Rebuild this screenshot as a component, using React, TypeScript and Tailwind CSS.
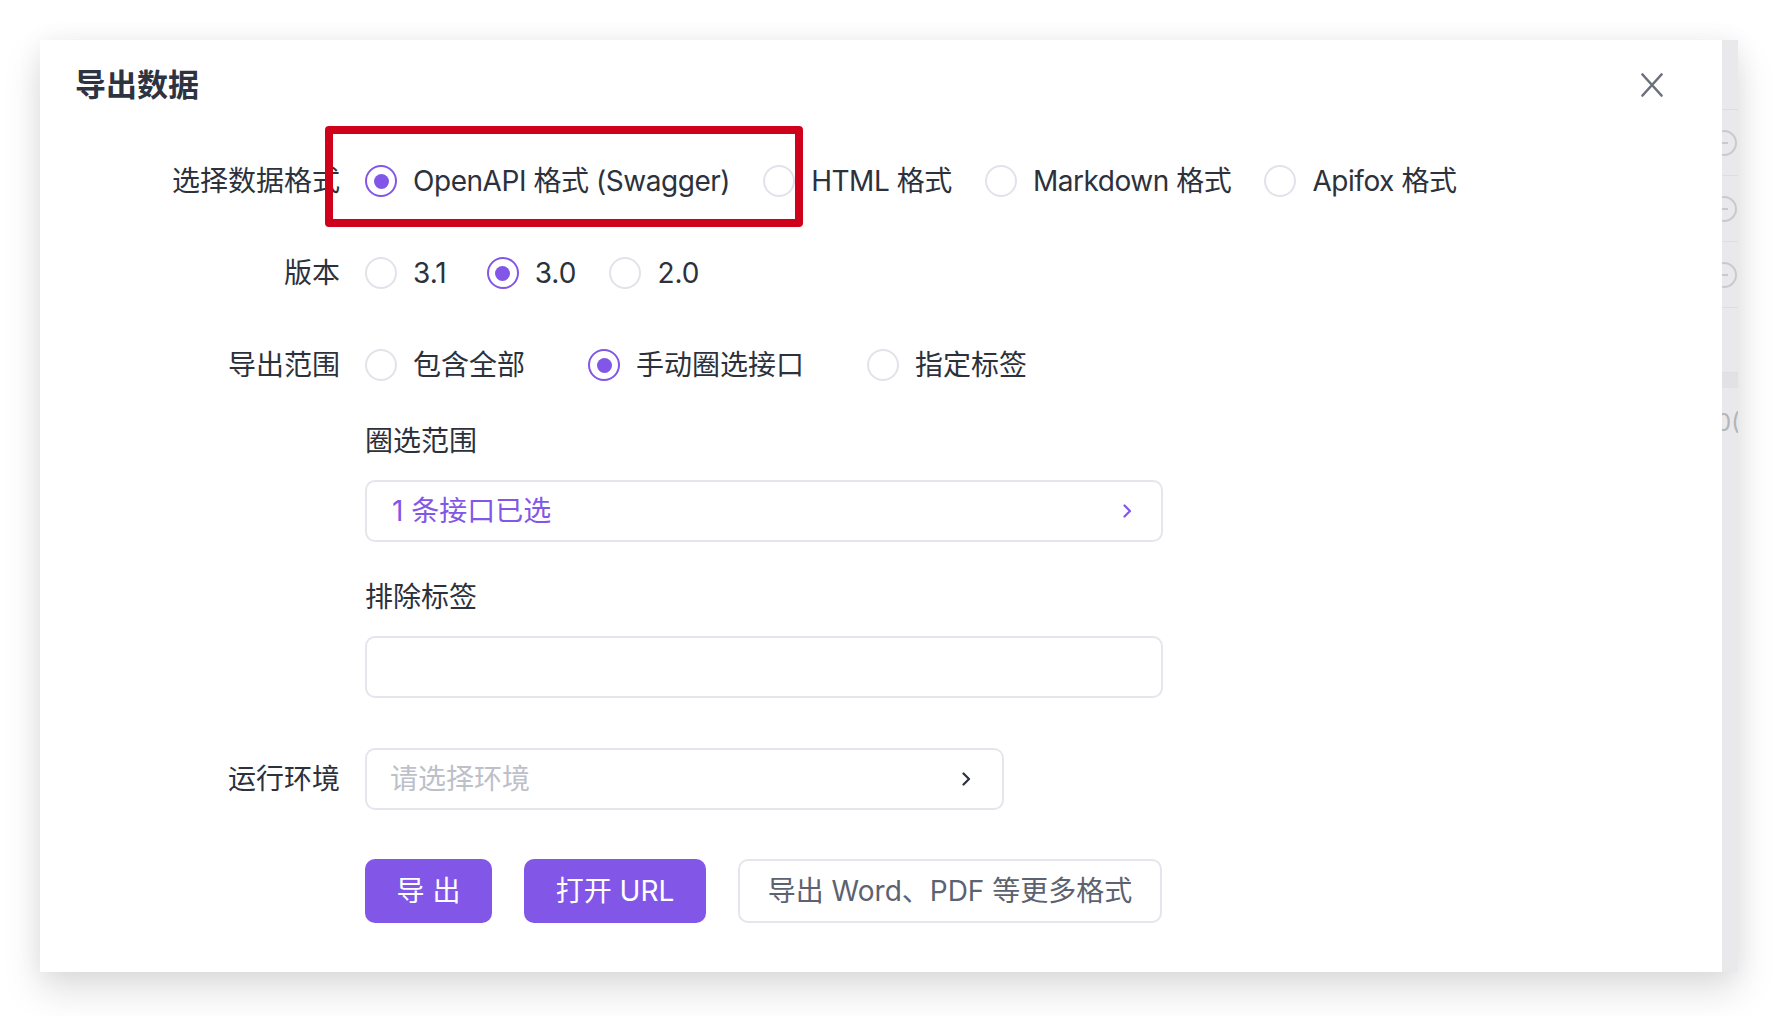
import React from "react";

const FONT = "font-['Inter','Noto_Sans_CJK_SC',sans-serif]";

function Radio({ checked, label, tight, className }: { checked?: boolean; label: string; tight?: boolean; className?: string }) {
  return (
    <div className={"flex items-center gap-4 " + (className ?? "")}>
      <span
        className={
          "flex h-8 w-8 shrink-0 items-center justify-center rounded-full border-2 bg-white " +
          (checked ? "border-[#8257e8]" : "border-[#e1e3ea]")
        }
      >
        {checked && <span className="h-[15px] w-[15px] rounded-full bg-[#8257e8]" />}
      </span>
      <span
        className={
          "whitespace-nowrap text-[28px] leading-[44px] text-[#2c313c] " + (tight ? "tracking-[-0.45px]" : "")
        }
      >
        {label}
      </span>
    </div>
  );
}

function Chevron({ color }: { color: string }) {
  return (
    <svg width="9" height="14" viewBox="0 0 9 14" fill="none">
      <path d="M1.5 1.5 L7 7 L1.5 12.5" stroke={color} strokeWidth="2.2" strokeLinecap="round" strokeLinejoin="round" />
    </svg>
  );
}

function Label({ children }: { children: React.ReactNode }) {
  return (
    <div className="w-[325px] shrink-0 pr-[25px] text-right text-[28px] leading-[44px] text-[#2c313c] whitespace-nowrap">
      {children}
    </div>
  );
}

function StripRow({ circle }: { circle?: boolean }) {
  return (
    <div className="flex h-[66px] items-center border-b border-[#dedee2]">
      {circle && (
        <div className="ml-[-11px] flex h-[26px] w-[26px] shrink-0 items-center justify-center rounded-full border-2 border-[#c9c9ce]">
          <div className="h-[2px] w-[8px] bg-[#c9c9ce]" />
        </div>
      )}
    </div>
  );
}

export default function App() {
  return (
    <div className={"min-h-[1016px] w-[1778px] bg-white pl-[40px] pt-[40px] " + FONT}>
      <div className="flex h-[932px] w-[1698px] shadow-[0_18px_36px_rgba(0,0,0,0.13),0_0_24px_rgba(0,0,0,0.05)]">
        {/* Dialog */}
        <div className="relative flex w-[1682px] shrink-0 flex-col bg-white">
          {/* Header */}
          <div className="flex items-center justify-between pl-[35px] pr-[59px] pt-[25px]">
            <div className="text-[31px] font-semibold leading-[40px] text-[#2d3340]">导出数据</div>
            <svg width="22" height="24" viewBox="0 0 22 24" fill="none">
              <path d="M1.5 1.5 L20.5 22.5 M20.5 1.5 L1.5 22.5" stroke="#6b707c" strokeWidth="2.6" strokeLinecap="round" />
            </svg>
          </div>

          {/* Format row */}
          <div className="mt-[54px] flex items-center">
            <Label>选择数据格式</Label>
            <div className="flex items-center gap-[33px]">
              <Radio checked tight label="OpenAPI 格式 (Swagger)" />
              <Radio tight label="HTML 格式" />
              <Radio tight label="Markdown 格式" />
              <Radio tight label="Apifox 格式" />
            </div>
          </div>

          {/* Version row */}
          <div className="mt-[48px] flex items-center">
            <Label>版本</Label>
            <div className="flex items-center gap-[33px]">
              <Radio label="3.1" />
              <Radio checked label="3.0" className="ml-[7px]" />
              <Radio label="2.0" />
            </div>
          </div>

          {/* Scope row */}
          <div className="mt-[48px] flex items-center">
            <Label>导出范围</Label>
            <div className="flex items-center gap-[63px]">
              <Radio label="包含全部" />
              <Radio checked label="手动圈选接口" />
              <Radio label="指定标签" />
            </div>
          </div>

          {/* Sub section */}
          <div className="ml-[325px] flex flex-col">
            <div className="mt-[34px] text-[28px] leading-[40px] text-[#2c313c]">圈选范围</div>
            <div className="mt-[19px] flex h-[62px] w-[798px] items-center justify-between rounded-[10px] border-2 border-[#e4e6ec] pl-[25px] pr-[29px]">
              <span className="text-[28px] text-[#8257e8]">1 条接口已选</span>
              <Chevron color="#8257e8" />
            </div>
            <div className="mt-[35px] text-[28px] leading-[40px] text-[#2c313c]">排除标签</div>
            <div className="mt-[19px] h-[62px] w-[798px] rounded-[10px] border-2 border-[#e4e6ec]" />
          </div>

          {/* Env row */}
          <div className="mt-[50px] flex items-center">
            <Label>运行环境</Label>
            <div className="flex h-[62px] w-[639px] items-center justify-between rounded-[10px] border-2 border-[#e4e6ec] pl-[23px] pr-[31px]">
              <span className="text-[28px] text-[#bcc0c9]">请选择环境</span>
              <Chevron color="#2c313c" />
            </div>
          </div>

          {/* Buttons */}
          <div className="ml-[325px] mt-[49px] flex items-center gap-[32px]">
            <button className="flex h-[64px] w-[127px] items-center justify-center rounded-[10px] bg-[#8257e8] text-[28px] text-white">
              导 出
            </button>
            <button className="flex h-[64px] w-[182px] items-center justify-center rounded-[10px] bg-[#8257e8] text-[28px] text-white">
              打开 URL
            </button>
            <button className="flex h-[64px] w-[424px] items-center justify-center rounded-[10px] border-2 border-[#e4e6ec] bg-white text-[28px] text-[#5c6270]">
              导出 Word、PDF 等更多格式
            </button>
          </div>

          {/* Red annotation box */}
          <div className="pointer-events-none absolute left-[285px] top-[86px] h-[101px] w-[478px] rounded-[4px] border-[8px] border-[#d0021b]" />
        </div>

        {/* Underlying page strip */}
        <div className="flex w-[16px] shrink-0 flex-col overflow-hidden bg-[#e9e9eb]">
          <div className="h-[70px] border-b border-[#dedee2]" />
          <StripRow circle />
          <StripRow circle />
          <StripRow circle />
          <div className="h-[65px] border-b border-[#dedee2]" />
          <div className="h-[15px] bg-[#e2e2e5]" />
          <div className="ml-[-6px] mt-[20px] text-[24px] leading-[30px] text-[#b4b4b9]">0(</div>
        </div>
      </div>
    </div>
  );
}
